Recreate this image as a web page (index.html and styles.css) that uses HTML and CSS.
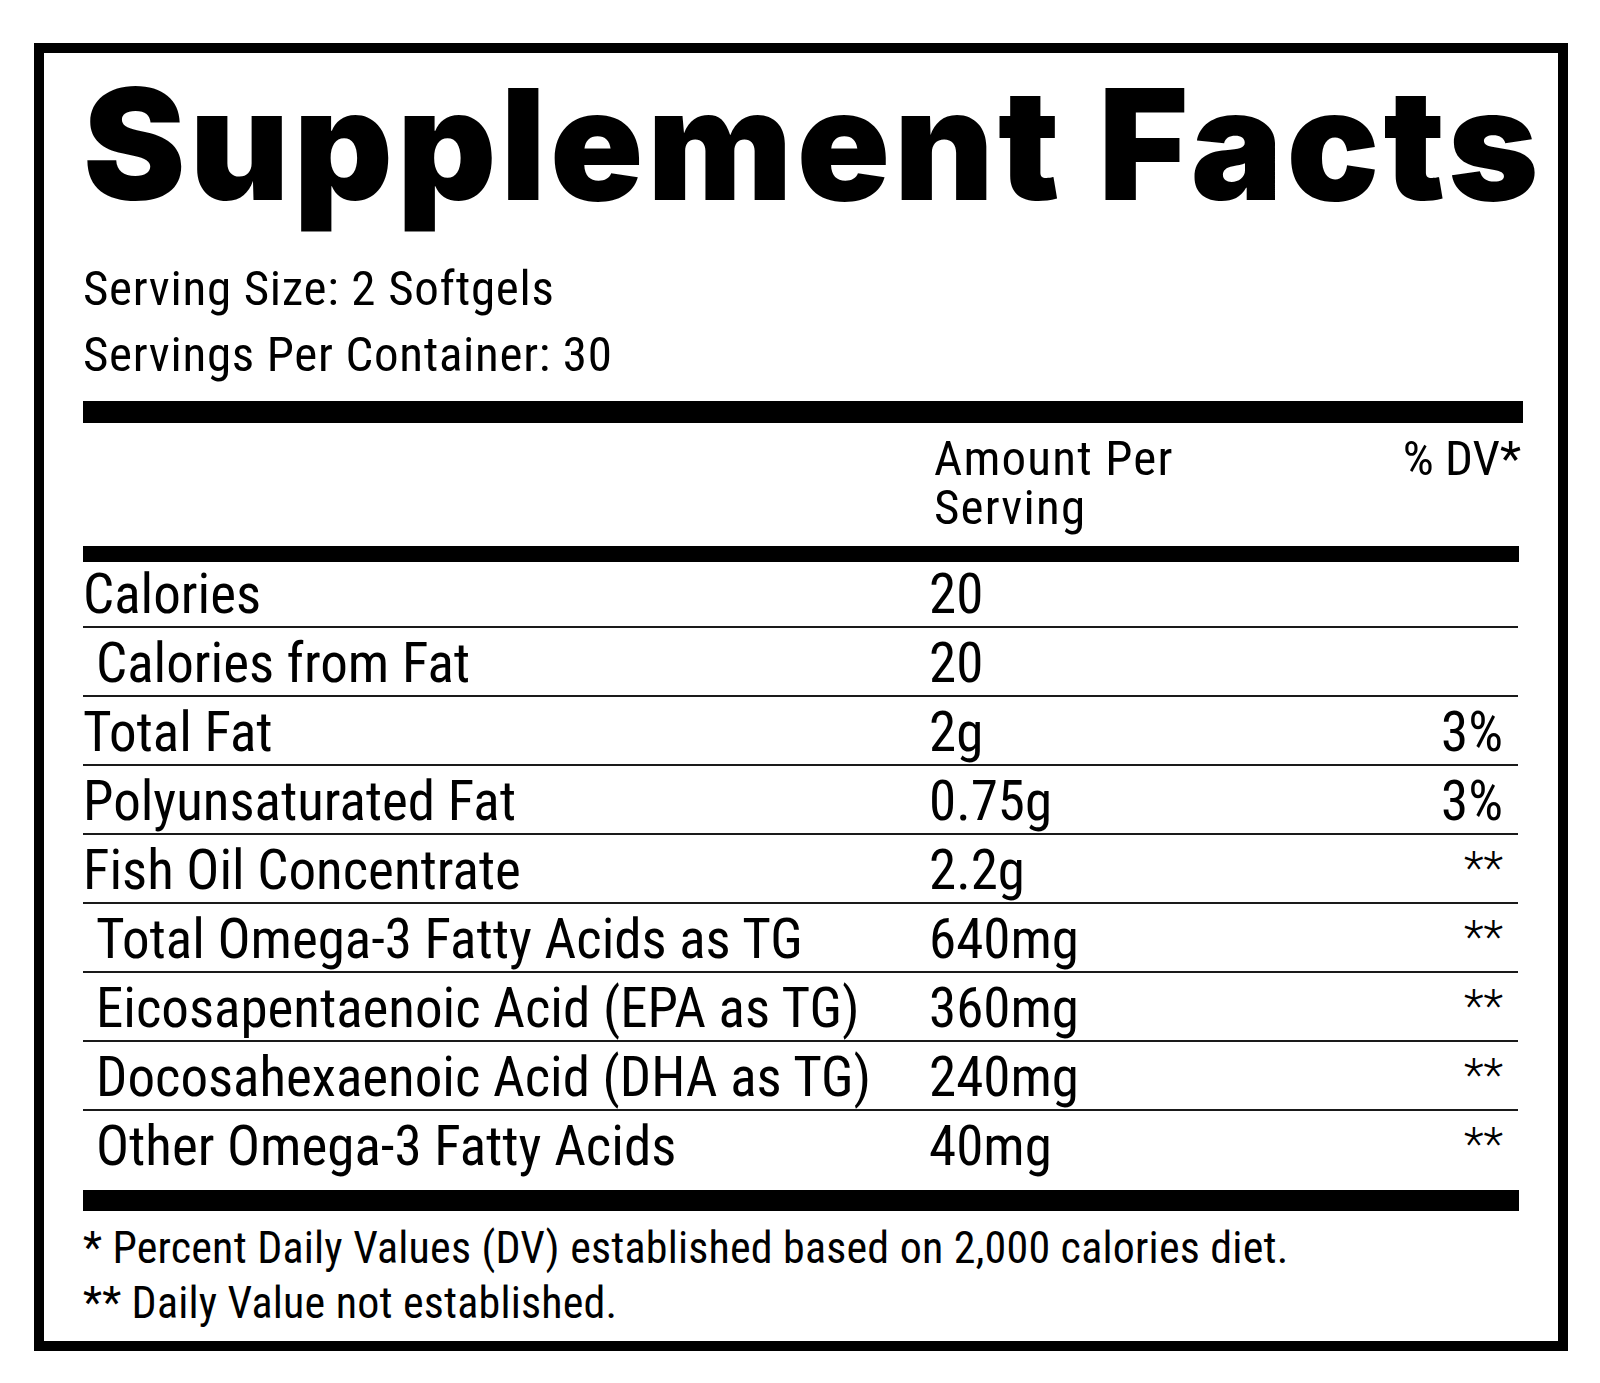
FILE: index.html
```html
<!DOCTYPE html>
<html lang="en">
<head>
<meta charset="utf-8">
<title>Supplement Facts</title>
<link rel="stylesheet" href="styles.css">
</head>
<body>
<div class="label">
  <h1 class="title">Supplement Facts</h1>
  <div class="serving">
    <p>Serving Size: 2 Softgels</p>
    <p>Servings Per Container: 30</p>
  </div>
  <div class="bar bar-top"></div>
  <div class="head">
    <span class="h-name"></span>
    <span class="h-amt"><span class="h-line">Amount Per</span><span class="h-line">Serving</span></span>
    <span class="h-dv">% DV*</span>
  </div>
  <div class="bar bar-mid"></div>
  <div class="rows">
    <div class="row"><span class="name">Calories</span><span class="amt">20</span><span class="dv"></span></div>
    <div class="row"><span class="name sub">Calories from Fat</span><span class="amt">20</span><span class="dv"></span></div>
    <div class="row"><span class="name">Total Fat</span><span class="amt">2g</span><span class="dv">3%</span></div>
    <div class="row"><span class="name">Polyunsaturated Fat</span><span class="amt">0.75g</span><span class="dv">3%</span></div>
    <div class="row"><span class="name">Fish Oil Concentrate</span><span class="amt">2.2g</span><span class="dv"><span class="na">**</span></span></div>
    <div class="row"><span class="name sub">Total Omega-3 Fatty Acids as TG</span><span class="amt">640mg</span><span class="dv"><span class="na">**</span></span></div>
    <div class="row"><span class="name sub">Eicosapentaenoic Acid (EPA as TG)</span><span class="amt">360mg</span><span class="dv"><span class="na">**</span></span></div>
    <div class="row"><span class="name sub">Docosahexaenoic Acid (DHA as TG)</span><span class="amt">240mg</span><span class="dv"><span class="na">**</span></span></div>
    <div class="row"><span class="name sub">Other Omega-3 Fatty Acids</span><span class="amt">40mg</span><span class="dv"><span class="na">**</span></span></div>
  </div>
  <div class="bar bar-bottom"></div>
  <div class="notes">
    <p>* Percent Daily Values (DV) established based on 2,000 calories diet.</p>
    <p>** Daily Value not established.</p>
  </div>
</div>
</body>
</html>
```
FILE: styles.css
```css
html, body {
  margin: 0;
  padding: 0;
  background: #fff;
}

body {
  color: #000;
  font-family: "Roboto Condensed", Roboto, "Liberation Sans", Arial, sans-serif;
  font-stretch: condensed;
}

p, h1 {
  margin: 0;
}

.label {
  box-sizing: border-box;
  width: 1534px;
  margin: 43px 0 0 34px;
  border: 10px solid #000;
  padding: 0 40px 10px 39px;
}

.title {
  margin-top: 14px;
  font-family: Inter, "Liberation Sans", Arial, sans-serif;
  font-stretch: normal;
  font-weight: 900;
  font-size: 154px;
  line-height: 154px;
  letter-spacing: 4px;
  white-space: nowrap;
}

.serving {
  margin-top: 35px;
  font-size: 49px;
  line-height: 66px;
  letter-spacing: 0.7px;
  white-space: nowrap;
}

.bar {
  background: #000;
}

.bar-top {
  margin-top: 13px;
  height: 22px;
  margin-right: -5px;
}

.bar-mid {
  height: 16px;
  margin-right: -1px;
}

.bar-bottom {
  margin-top: 12px;
  height: 21px;
  margin-right: -1px;
}

.head,
.row {
  display: grid;
  grid-template-columns: 846px 1fr auto;
  align-items: start;
}

.head {
  padding: 11px 0 14px;
  font-size: 49px;
  line-height: 49px;
}

.h-amt {
  display: flex;
  flex-direction: column;
  padding-left: 5px;
  letter-spacing: 1.2px;
  white-space: nowrap;
}

.h-dv {
  margin-right: -3px;
  text-align: right;
  white-space: nowrap;
}

.rows {
  font-size: 55px;
}

.row {
  height: 64px;
  padding-top: 3px;
  line-height: 64px;
  border-bottom: 2px solid #1a1a1a;
  white-space: nowrap;
}

.row:first-child {
  padding-top: 0;
}

.row:last-child {
  border-bottom: 0;
}

.name.sub {
  padding-left: 13px;
}

.dv {
  padding-right: 15px;
  text-align: right;
}

.na {
  font-size: 46px;
  font-weight: 300;
  line-height: 0;
  vertical-align: 5px;
}

.notes {
  padding-top: 10px;
  font-size: 44px;
  line-height: 55px;
  letter-spacing: 0.2px;
  white-space: nowrap;
}
```
